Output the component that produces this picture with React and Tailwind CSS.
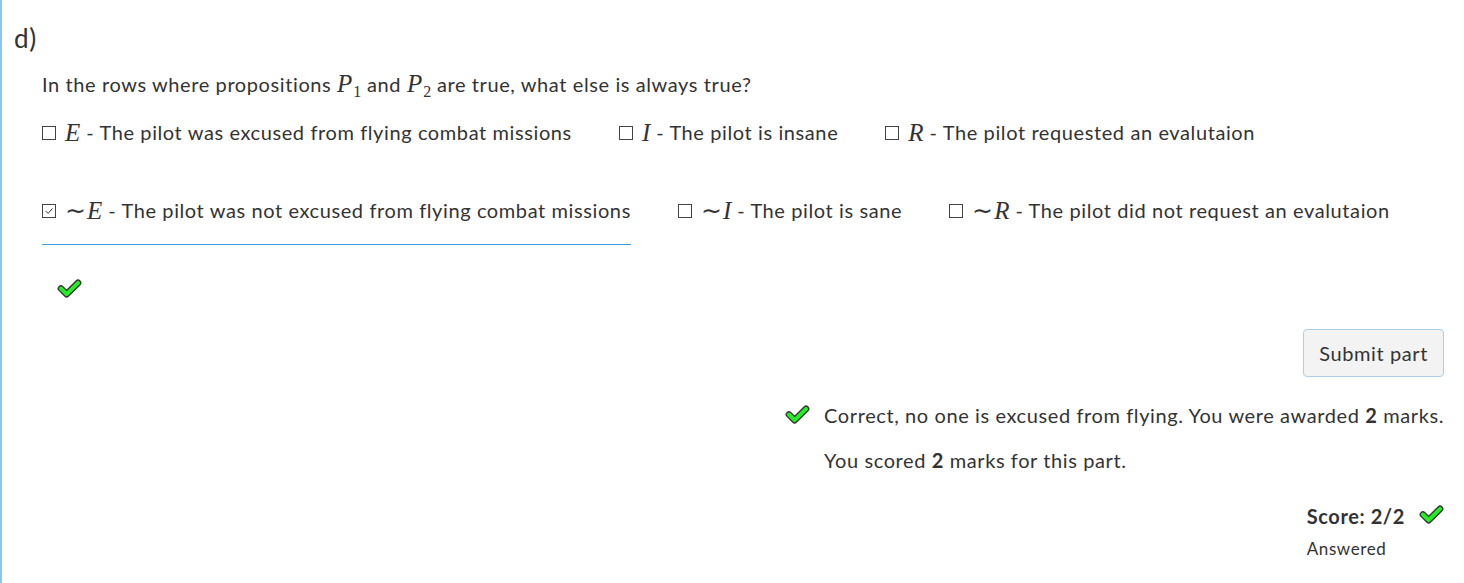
import React from "react";

const font = { fontFamily: "Lato, 'Noto Sans', sans-serif" };

function Tick({ className = "" }) {
  return (
    <svg viewBox="0 0 26 20" className={className} aria-hidden="true">
      <polyline points="4,10 10,16 22,4" fill="none" stroke="#333" strokeWidth="7" strokeLinecap="round" strokeLinejoin="round" />
      <polyline points="4,10 10,16 22,4" fill="none" stroke="#22ee22" strokeWidth="4.2" strokeLinecap="round" strokeLinejoin="round" />
    </svg>
  );
}

function Box({ checked }) {
  return (
    <span className="inline-flex w-[14px] h-[14px] border border-[#444] items-center justify-center mr-[9px] relative top-[1px]">
      {checked && (
        <svg viewBox="0 0 12 12" className="w-[10px] h-[10px]">
          <polyline points="2,6 5,9 10,3" fill="none" stroke="#333" strokeWidth="1.2" />
        </svg>
      )}
    </span>
  );
}

function M({ children, neg }) {
  return (
    <span className="text-[25px] leading-none tracking-normal" style={{ fontFamily: "'Liberation Serif', serif" }}>
      {neg && <span className="not-italic mr-[1px]">∼</span>}
      <span className="italic">{children}</span>
    </span>
  );
}

function Option({ letter, text, neg, checked, underline }) {
  return (
    <div className="flex flex-col">
      <div className="flex items-center pb-[20px]">
        <Box checked={checked} />
        <M neg={neg}>{letter}</M>
        <span className="ml-[6px]">- {text}</span>
      </div>
      <div className={underline ? "h-[1px] bg-[#3d9be3]" : "h-[1px]"} />
    </div>
  );
}

function P({ sub }) {
  return (
    <span className="text-[25px] leading-none tracking-normal" style={{ fontFamily: "'Liberation Serif', serif" }}>
      <span className="italic">P</span>
      <span className="text-[16px] relative top-[5px] ml-[1px]">{sub}</span>
    </span>
  );
}

export default function App() {
  return (
    <div className="min-h-[583px] border-l-2 border-[#8cc6ef] text-[#333] bg-white pr-[20px] tracking-[0.6px]" style={font}>
      <div className="pl-[12px] pt-[22px] text-[26px] leading-[32px]">d)</div>
      <div className="pl-[40px]">
        <p className="mt-[16px] text-[20px] leading-[28px]">
          In the rows where propositions <P sub="1" /> and <P sub="2" /> are true, what else is always true?
        </p>
        <div className="mt-[20px] text-[20px] leading-[28px] flex flex-col gap-y-[29px]">
          <div className="flex gap-x-[47px]">
            <Option letter="E" text="The pilot was excused from flying combat missions" />
            <Option letter="I" text="The pilot is insane" />
            <Option letter="R" text="The pilot requested an evalutaion" />
          </div>
          <div className="flex gap-x-[47px]">
            <Option letter="E" neg checked underline text="The pilot was not excused from flying combat missions" />
            <Option letter="I" neg text="The pilot is sane" />
            <Option letter="R" neg text="The pilot did not request an evalutaion" />
          </div>
        </div>
        <div className="mt-[34px] pl-[15px]">
          <Tick className="w-[25px] h-[19px]" />
        </div>
      </div>
      <div className="flex justify-end mt-[31px]">
        <button className="h-[48px] px-[15px] bg-[#f3f3f3] border border-[#a9cfea] rounded-[4px] text-[20px]">
          Submit part
        </button>
      </div>
      <div className="flex justify-end mt-[24px] text-[20px] leading-[28px]">
        <div className="flex">
          <Tick className="w-[25px] h-[19px] mt-[4px] mr-[14px]" />
          <div>
            <div>Correct, no one is excused from flying. You were awarded <b className="font-bold">2</b> marks.</div>
            <div className="mt-[17px]">You scored <b className="font-bold">2</b> marks for this part.</div>
          </div>
        </div>
      </div>
      <div className="flex justify-end mt-[28px]">
        <div>
          <div className="flex items-center text-[20px] leading-[28px] font-bold">
            Score: 2/2
            <Tick className="w-[25px] h-[19px] ml-[14px] -mt-[4px]" />
          </div>
          <div className="text-[17px] leading-[24px] mt-[7px]">Answered</div>
        </div>
      </div>
    </div>
  );
}
